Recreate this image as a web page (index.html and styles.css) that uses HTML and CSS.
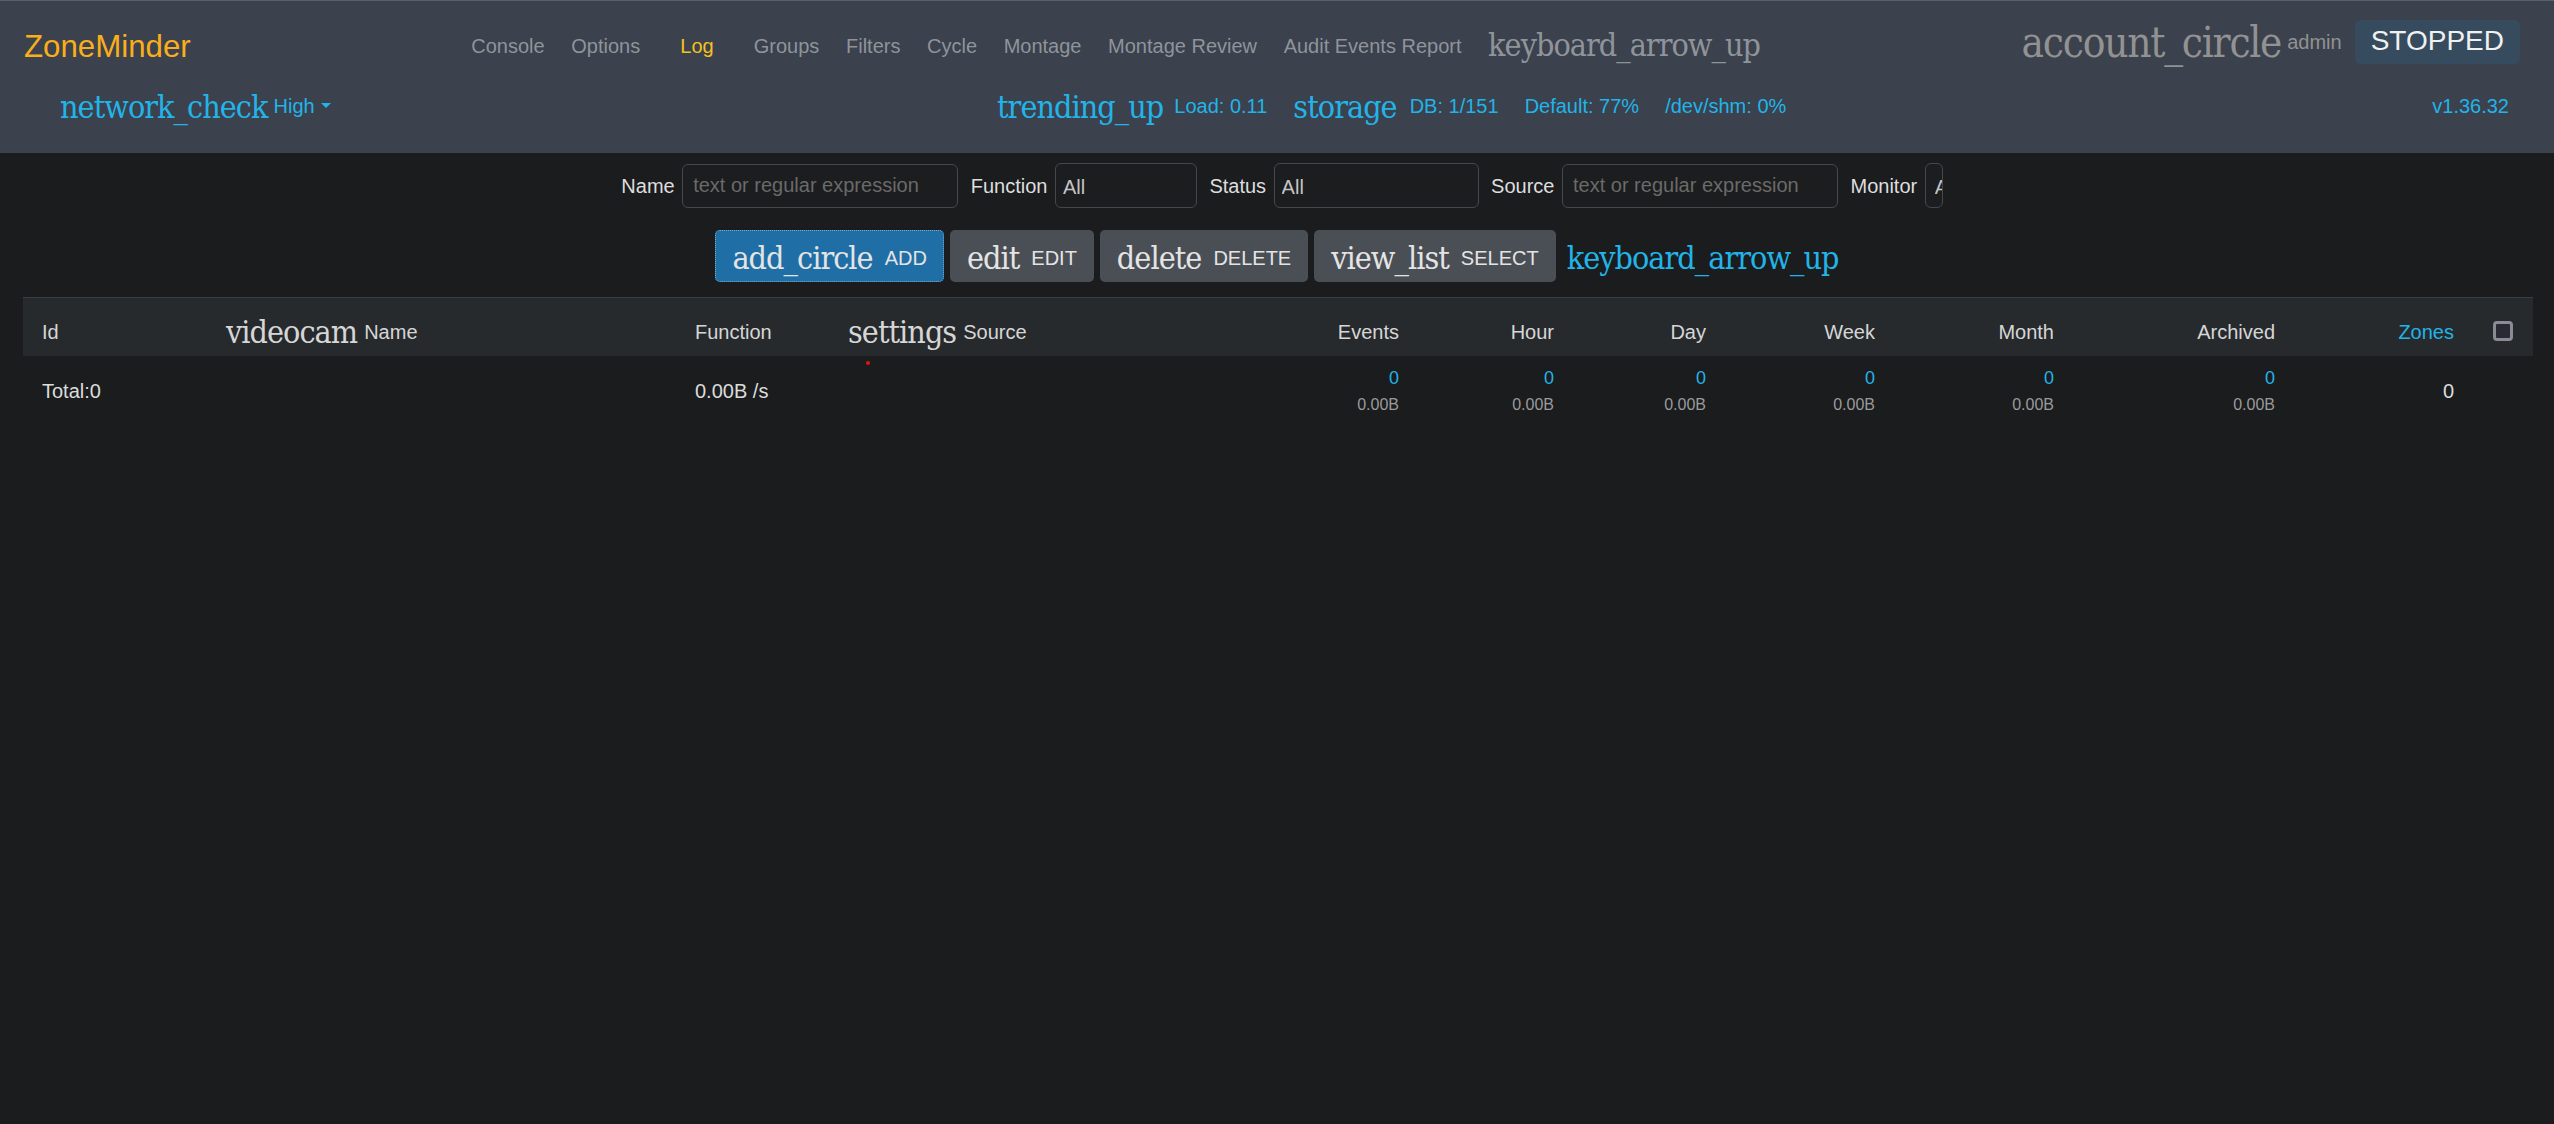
FILE: index.html
```html
<!DOCTYPE html>
<html lang="en">
<head>
<meta charset="utf-8">
<title>ZoneMinder - Console</title>
<link rel="stylesheet" href="styles.css">
</head>
<body>
<nav class="navbar">
  <div class="nav-row nav-top">
    <a class="brand" href="#">ZoneMinder</a>
    <ul class="menu">
      <li><a href="#">Console</a></li>
      <li><a href="#">Options</a></li>
      <li class="active"><a href="#">Log</a></li>
      <li><a href="#">Groups</a></li>
      <li><a href="#">Filters</a></li>
      <li><a href="#">Cycle</a></li>
      <li><a href="#">Montage</a></li>
      <li><a href="#">Montage Review</a></li>
      <li><a href="#">Audit Events Report</a></li>
      <li class="menu-icon"><span class="icon">keyboard_arrow_up</span></li>
    </ul>
    <div class="user">
      <span class="icon icon-account">account_circle</span>
      <span class="username">admin</span>
      <button class="state" type="button">STOPPED</button>
    </div>
  </div>
  <div class="nav-row nav-bottom">
    <div class="bandwidth">
      <span class="icon">network_check</span>
      <span class="bw-label">High</span>
      <span class="caret"></span>
    </div>
    <ul class="status">
      <li><span class="icon">trending_up</span><span class="txt">Load: 0.11</span></li>
      <li class="wide"><span class="icon">storage</span><span class="txt">DB: 1/151</span></li>
      <li><span class="txt">Default: 77%</span></li>
      <li><span class="txt">/dev/shm: 0%</span></li>
    </ul>
    <div class="version">v1.36.32</div>
  </div>
</nav>

<form class="filters">
  <div class="filter">
    <label for="fname">Name</label>
    <input id="fname" class="control input" type="text" placeholder="text or regular expression">
  </div>
  <div class="filter">
    <label for="ffunc">Function</label>
    <select id="ffunc" class="control select sel-function"><option>All</option></select>
  </div>
  <div class="filter">
    <label for="fstatus">Status</label>
    <select id="fstatus" class="control select sel-status"><option>All</option></select>
  </div>
  <div class="filter">
    <label for="fsource">Source</label>
    <input id="fsource" class="control input" type="text" placeholder="text or regular expression">
  </div>
  <div class="filter">
    <label for="fmonitor">Monitor</label>
    <select id="fmonitor" class="control select sel-monitor"><option>All</option></select>
  </div>
</form>

<div class="toolbar">
  <button class="btn btn-primary" type="button"><span class="icon">add_circle</span><span class="lbl">ADD</span></button>
  <button class="btn" type="button"><span class="icon">edit</span><span class="lbl">EDIT</span></button>
  <button class="btn" type="button"><span class="icon">delete</span><span class="lbl">DELETE</span></button>
  <button class="btn" type="button"><span class="icon">view_list</span><span class="lbl">SELECT</span></button>
  <span class="icon toolbar-toggle">keyboard_arrow_up</span>
</div>

<table class="monitors">
  <colgroup>
    <col class="c-id"><col class="c-name"><col class="c-func"><col class="c-src">
    <col class="c-events"><col class="c-hour"><col class="c-day"><col class="c-week">
    <col class="c-month"><col class="c-arch"><col class="c-zones"><col class="c-check">
  </colgroup>
  <thead>
    <tr>
      <th class="first"><div class="th">Id</div></th>
      <th><div class="th"><span class="icon">videocam</span><span>Name</span></div></th>
      <th><div class="th">Function</div></th>
      <th class="src"><div class="th"><span class="icon">settings</span><span>Source</span></div><span class="dot"></span></th>
      <th><div class="th right">Events</div></th>
      <th><div class="th right">Hour</div></th>
      <th><div class="th right">Day</div></th>
      <th><div class="th right">Week</div></th>
      <th><div class="th right">Month</div></th>
      <th><div class="th right">Archived</div></th>
      <th><div class="th right link">Zones</div></th>
      <th class="check"><div class="th"><span class="checkbox"></span></div></th>
    </tr>
  </thead>
  <tbody>
    <tr>
      <td class="first">Total:0</td>
      <td></td>
      <td>0.00B /s</td>
      <td></td>
      <td class="right"><div class="num">0</div><div class="size">0.00B</div></td>
      <td class="right"><div class="num">0</div><div class="size">0.00B</div></td>
      <td class="right"><div class="num">0</div><div class="size">0.00B</div></td>
      <td class="right"><div class="num">0</div><div class="size">0.00B</div></td>
      <td class="right"><div class="num">0</div><div class="size">0.00B</div></td>
      <td class="right"><div class="num">0</div><div class="size">0.00B</div></td>
      <td class="right">0</td>
      <td></td>
    </tr>
  </tbody>
</table>
</body>
</html>
```
FILE: styles.css
```css
html, body {
  margin: 0;
  padding: 0;
}

body {
  background: #1b1c1e;
  color: #dcdcdc;
  font-family: "Liberation Sans", Arial, sans-serif;
  font-size: 20px;
  line-height: 1.2;
  min-height: 1124px;
}

a {
  text-decoration: none;
}

.icon {
  font-family: "DejaVu Serif Condensed", "DejaVu Serif", serif;
  font-stretch: condensed;
  font-size: 32px;
  letter-spacing: -0.03em;
  line-height: 36px;
  font-weight: normal;
  white-space: nowrap;
}

/* ---------- navbar ---------- */
.navbar {
  background: #3b414d;
  border-top: 1px solid #5b5f66;
  height: 153px;
  box-sizing: border-box;
  padding: 0 34px 0 24px;
}

.nav-row {
  display: flex;
  align-items: flex-start;
}

.nav-top {
  height: 77px;
}

.nav-bottom {
  height: 75px;
}

.brand {
  display: block;
  width: 434px;
  flex: none;
  font-size: 31.25px;
  line-height: 37.5px;
  color: #f9ae1b;
  margin-top: 27.4px;
}

.menu {
  display: flex;
  list-style: none;
  margin: 0;
  padding: 0;
}

.menu a {
  display: block;
  padding: 0 13.3px;
  margin-top: 33.1px;
  line-height: 24px;
  color: #8f949b;
  white-space: nowrap;
}

.menu .active a {
  color: #f4c21b;
  padding: 0 26.8px;
}

.menu-icon {
  padding: 0 13.3px;
  margin-top: 26px;
  color: #8f949b;
}

.user {
  margin-left: auto;
  display: flex;
  align-items: flex-start;
}

.icon-account {
  font-size: 42px;
  line-height: 46.8px;
  margin-top: 19.2px;
  color: #929292;
}

.username {
  margin-top: 29.1px;
  margin-left: 6px;
  color: #929292;
}

.state {
  margin-top: 19px;
  margin-left: 13px;
  font-family: "Liberation Sans", Arial, sans-serif;
  font-size: 28px;
  line-height: 33.6px;
  padding: 4px 16px 6px;
  border: none;
  border-radius: 6px;
  background: #364c5e;
  color: #f0f0f0;
}

.bandwidth {
  display: flex;
  align-items: flex-start;
  width: 937px;
  flex: none;
  margin-left: 36px;
  color: #22b4e8;
}

.bandwidth .icon {
  margin-top: 11px;
}

.bw-label {
  margin-top: 16.1px;
  margin-left: 6px;
}

.caret {
  margin-top: 25px;
  margin-left: 6px;
  width: 0;
  height: 0;
  border-top: 5px solid #22b4e8;
  border-left: 5.5px solid transparent;
  border-right: 5.5px solid transparent;
}

.status {
  display: flex;
  list-style: none;
  margin: 0;
  padding: 0;
  gap: 26px;
  color: #22b4e8;
}

.status li {
  display: flex;
  align-items: flex-start;
  gap: 11px;
}

.status li.wide {
  gap: 13px;
}

.status .icon {
  margin-top: 11px;
}

.status .txt {
  margin-top: 16.1px;
  white-space: nowrap;
}

.version {
  margin-left: auto;
  margin-right: 11px;
  margin-top: 16.1px;
  color: #22b4e8;
}

/* ---------- filters ---------- */
.filters {
  display: flex;
  justify-content: center;
  align-items: center;
  gap: 12.5px;
  margin: 0;
  padding: 10px 0 0 10px;
}

.filter {
  display: flex;
  align-items: center;
  gap: 7.5px;
}

.filter label {
  color: #dedede;
  line-height: 24px;
}

.control {
  box-sizing: border-box;
  border: 1px solid #44484d;
  border-radius: 6px;
  background: #1c1d1f;
  font-family: "Liberation Sans", Arial, sans-serif;
  font-size: 20px;
  margin: 0;
}

.input {
  width: 276px;
  height: 44px;
  padding: 0 10px;
  color: #cccccc;
}

.input::placeholder {
  color: #6a6a6a;
}

.select {
  height: 45px;
  padding: 2px 7px 0;
  color: #c4c4c4;
  appearance: none;
  -webkit-appearance: none;
}

.sel-function {
  width: 142px;
}

.sel-status {
  width: 205px;
}

.sel-monitor {
  width: 18px;
  padding: 2px 0 0 9px;
}

/* ---------- toolbar ---------- */
.toolbar {
  display: flex;
  justify-content: center;
  align-items: flex-start;
  gap: 6px;
  margin-top: 22px;
  height: 52px;
}

.btn {
  display: flex;
  align-items: flex-start;
  gap: 12px;
  height: 52px;
  box-sizing: border-box;
  padding: 0 17px;
  margin: 0;
  border: none;
  border-radius: 5px;
  background: #4a4f55;
  color: #e4e4e4;
  font-family: "Liberation Sans", Arial, sans-serif;
  font-size: 20px;
}

.btn .icon {
  margin-top: 10px;
}

.btn .lbl {
  margin-top: 16px;
  line-height: 24px;
}

.btn-primary {
  background: #1f6ea6;
  outline: 1px dotted #7ea9cf;
  outline-offset: -1px;
}

.toolbar-toggle {
  color: #22b4e8;
  margin-top: 10px;
  margin-left: 5px;
}

/* ---------- table ---------- */
.monitors {
  width: 2510px;
  margin: 15px 21px 0 23px;
  border-collapse: separate;
  border-spacing: 0;
  table-layout: fixed;
}

.c-id { width: 191px; }
.c-name { width: 469px; }
.c-func { width: 153px; }
.c-src { width: 400px; }
.c-events { width: 175px; }
.c-hour { width: 155px; }
.c-day { width: 152px; }
.c-week { width: 169px; }
.c-month { width: 179px; }
.c-arch { width: 221px; }
.c-zones { width: 179px; }
.c-check { width: 67px; }

.monitors th {
  background: #272a2d;
  border-top: 1px solid #393d41;
  padding: 22px 12px 12px;
  vertical-align: top;
  text-align: left;
  font-weight: normal;
  line-height: 24px;
  color: #d6d6d6;
}

.monitors th.first,
.monitors td.first {
  padding-left: 19px;
}

.th {
  display: flex;
  align-items: flex-start;
  white-space: nowrap;
}

.th.right {
  justify-content: flex-end;
}

.th.link {
  color: #22b4e8;
}

.th .icon {
  margin: -6px 7px -6px 0;
}

.monitors th.src {
  position: relative;
}

.dot {
  position: absolute;
  left: 30px;
  top: 63px;
  width: 4px;
  height: 4px;
  border-radius: 50%;
  background: #e01414;
}

.monitors th.check {
  padding-left: 27px;
}

.checkbox {
  display: block;
  width: 20px;
  height: 20px;
  margin-top: 1px;
  box-sizing: border-box;
  border: 3px solid #8b8b95;
  border-radius: 4px;
  background: #2a2a34;
}

.monitors td {
  height: 70px;
  padding: 0 12px;
  vertical-align: middle;
  line-height: 30px;
  color: #dcdcdc;
  white-space: nowrap;
}

.monitors td.right {
  text-align: right;
}

.num {
  font-size: 18px;
  line-height: 26.25px;
  color: #22b4e8;
}

.size {
  font-size: 16px;
  line-height: 24px;
  margin-top: 2px;
  color: #9a9a9a;
}
```
